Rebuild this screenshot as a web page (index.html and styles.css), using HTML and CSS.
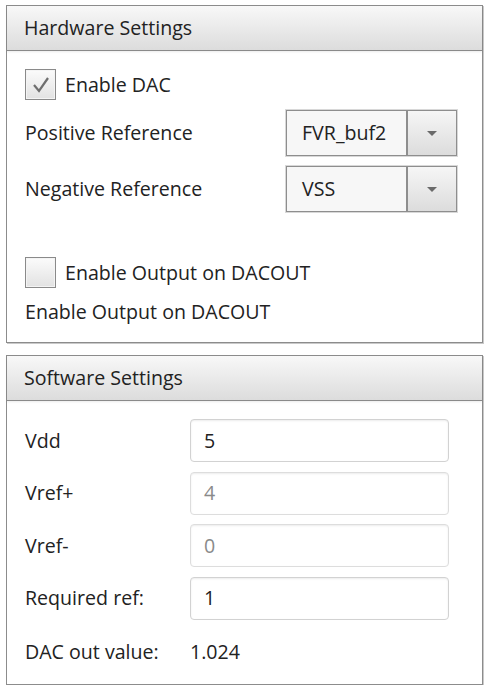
FILE: index.html
```html
<!DOCTYPE html>
<html>
<head>
<meta charset="utf-8">
<link rel="stylesheet" href="styles.css">
</head>
<body>
<section class="panel hw">
  <div class="panel-head">Hardware Settings</div>
  <div class="panel-body">
    <div class="check-row">
      <span class="checkbox"><svg viewBox="0 0 30 30" width="30" height="30"><polyline points="8,15 13,21 22,8" fill="none" stroke="#6e6e6e" stroke-width="2.2" stroke-linejoin="miter"/></svg></span>
      <span class="label">Enable DAC</span>
    </div>
    <div class="field-row">
      <span class="label">Positive Reference</span>
      <div class="combo"><span class="combo-text">FVR_buf2</span><span class="combo-btn"><span class="arrow"></span></span></div>
    </div>
    <div class="field-row">
      <span class="label">Negative Reference</span>
      <div class="combo"><span class="combo-text">VSS</span><span class="combo-btn"><span class="arrow"></span></span></div>
    </div>
    <div class="check-row spaced">
      <span class="checkbox"></span>
      <span class="label">Enable Output on DACOUT</span>
    </div>
    <div class="text-row">Enable Output on DACOUT</div>
  </div>
</section>
<section class="panel sw">
  <div class="panel-head">Software Settings</div>
  <div class="panel-body sw-body">
    <div class="input-row"><span class="label">Vdd</span><div class="input">5</div></div>
    <div class="input-row"><span class="label">Vref+</span><div class="input disabled">4</div></div>
    <div class="input-row"><span class="label">Vref-</span><div class="input disabled">0</div></div>
    <div class="input-row"><span class="label">Required ref:</span><div class="input">1</div></div>
    <div class="out-row"><span class="label">DAC out value:</span><span class="out-val">1.024</span></div>
  </div>
</section>
</body>
</html>
```
FILE: styles.css
```css
html, body {
  margin: 0;
  background: #ffffff;
}
body {
  padding: 5px 11px 0 6px;
  font-family: "Open Sans", "Noto Sans", "Liberation Sans", sans-serif;
  font-size: 19.6px;
  line-height: 24px;
  color: #222222;
  display: flex;
  flex-direction: column;
  gap: 12px;
}
.panel {
  border: 1px solid #8c8c8c;
  box-shadow: 1px 1px 0 #c9c9c9;
  background: #fff;
}
.panel-head {
  height: 45px;
  box-sizing: border-box;
  border-bottom: 1px solid #8a8a8a;
  background: linear-gradient(#f8f8f8, #dcdcdc);
  padding-left: 17px;
  display: flex;
  align-items: center;
  box-shadow: 0 1px 2px rgba(0,0,0,0.08);
}
.panel-body {
  padding: 18px 0 18px 18px;
  display: flex;
  flex-direction: column;
}
.check-row {
  height: 31px;
  display: flex;
  align-items: center;
  gap: 9px;
}
.check-row.spaced {
  margin-top: 45px;
}
.checkbox {
  width: 29px;
  height: 29px;
  border: 1px solid #8a8a8a;
  background: linear-gradient(#fbfbfb, #e2e2e2);
  box-shadow: inset 0 0 0 1px #f4f4f4;
  display: block;
}
.checkbox svg { display: block; }
.field-row {
  height: 46px;
  margin-top: 10px;
  display: grid;
  grid-template-columns: 261px 171px;
  align-items: center;
}
.combo {
  height: 46px;
  box-sizing: border-box;
  border: 1px solid #8e8e8e;
  box-shadow: 0 0 0 1px #d8d8d8;
  display: flex;
  background: #f7f7f7;
}
.combo-text {
  flex: 1;
  padding-left: 15px;
  display: flex;
  align-items: center;
  border-right: 2px solid #8e8e8e;
}
.combo-btn {
  width: 48px;
  background: linear-gradient(#f6f6f6, #dcdcdc);
  display: flex;
  align-items: center;
  justify-content: center;
}
.arrow {
  width: 0;
  height: 0;
  border-left: 5px solid transparent;
  border-right: 5px solid transparent;
  border-top: 5px solid #6a6a6a;
}
.text-row {
  height: 24px;
  margin-top: 12px;
  display: flex;
  align-items: center;
}
.sw-body {
  padding-top: 18px;
  padding-bottom: 20px;
}
.input-row {
  display: grid;
  grid-template-columns: 165px 259px;
  align-items: center;
  margin-bottom: 9.5px;
}
.input {
  height: 43px;
  box-sizing: border-box;
  border: 1px solid #d2d2d2;
  border-radius: 4px;
  box-shadow: inset 0 1px 2px rgba(0,0,0,0.08);
  padding-left: 13px;
  display: flex;
  align-items: center;
  background: #fff;
}
.input.disabled {
  color: #8a8a8a;
  border-color: #dddddd;
}
.out-row {
  height: 24px;
  margin-top: 11px;
  display: grid;
  grid-template-columns: 165px auto;
  align-items: center;
}
```
